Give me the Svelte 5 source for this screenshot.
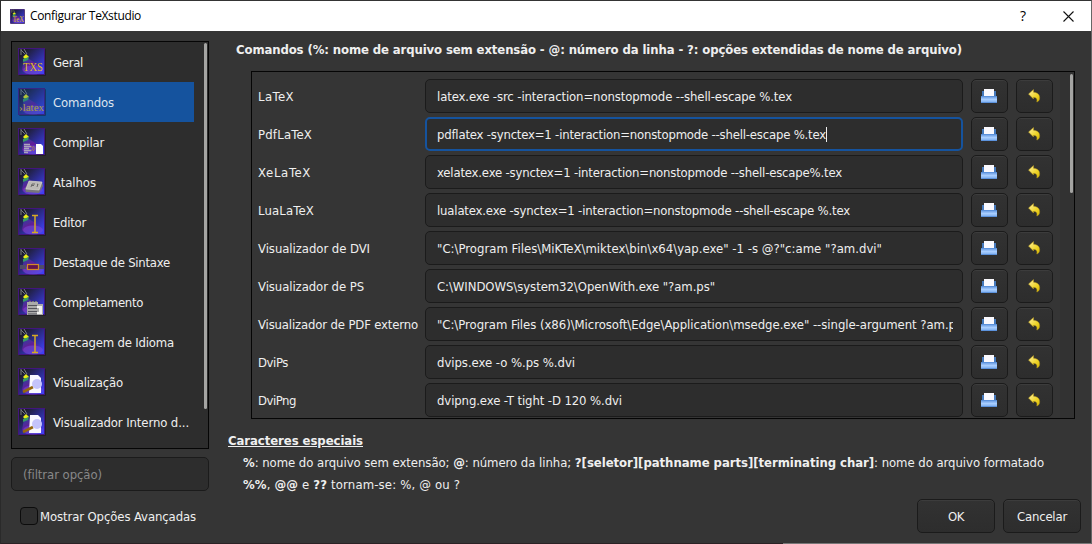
<script>
  const items = [
    { label: 'Geral', w: 30, icon: 'txs' },
    { label: 'Comandos', w: 61, icon: 'latex' },
    { label: 'Compilar', w: 51, icon: 'build' },
    { label: 'Atalhos', w: 43, icon: 'key' },
    { label: 'Editor', w: 33, icon: 'cursor' },
    { label: 'Destaque de Sintaxe', w: 117, icon: 'syntax' },
    { label: 'Completamento', w: 90, icon: 'complete' },
    { label: 'Checagem de Idioma', w: 121, icon: 'cursor' },
    { label: 'Visualização', w: 70, icon: 'preview' },
    { label: 'Visualizador Interno d...', w: 136, icon: 'preview' }
  ];
  const rows = [
    { label: 'LaTeX', w: 36, cmd: 'latex.exe -src -interaction=nonstopmode --shell-escape %.tex', cw: 355 },
    { label: 'PdfLaTeX', w: 54, cmd: 'pdflatex -synctex=1 -interaction=nonstopmode --shell-escape %.tex', cw: 389, focus: true },
    { label: 'XeLaTeX', w: 53, cmd: 'xelatex.exe -synctex=1 -interaction=nonstopmode --shell-escape%.tex', cw: 405 },
    { label: 'LuaLaTeX', w: 56, cmd: 'lualatex.exe -synctex=1 -interaction=nonstopmode --shell-escape %.tex', cw: 413 },
    { label: 'Visualizador de DVI', w: 112, cmd: '"C:\\Program Files\\MiKTeX\\miktex\\bin\\x64\\yap.exe" -1 -s @?"c:ame "?am.dvi"', cw: 445 },
    { label: 'Visualizador de PS', w: 106, cmd: 'C:\\WINDOWS\\system32\\OpenWith.exe "?am.ps"', cw: 278 },
    { label: 'Visualizador de PDF externo', w: 160, cmd: '"C:\\Program Files (x86)\\Microsoft\\Edge\\Application\\msedge.exe" --single-argument ?am.p', cw: 519 },
    { label: 'DviPs', w: 30, cmd: 'dvips.exe -o %.ps %.dvi', cw: 138 },
    { label: 'DviPng', w: 38, cmd: 'dvipng.exe -T tight -D 120 %.dvi', cw: 185 }
  ];

  // Tracks a label out or in so that it fills the given width.
  function fit(node, width) {
    const natural = node.getBoundingClientRect().width;
    node.style.letterSpacing = (width - natural) / node.textContent.length + 'px';
  }
</script>

<svelte:head><title>Configurar TeXstudio</title></svelte:head>

{#snippet appIcon(kind)}
  <svg class="pic" viewBox="0 0 28 28">
    <rect x="1" y="1" width="27" height="27" rx="1" fill="#17171c" opacity=".6" />
    <rect x=".5" y=".5" width="26" height="26" fill="url(#night)" stroke="#42157c" />
    <path d="M6 11 4 22l4 4h14l3-6-14-9z" fill="url(#beam)" />
    <ellipse cx="15" cy="22" rx="10" ry="4.500" fill="#7a50dc" opacity=".5" />
    <path d="M3 1v6M3 2l4 4M6 1l3 5" stroke="#777c80" fill="none" />
    <path d="m5 9 3-3 3 3-4 2z" fill="#e6ee14" />
    <path d="m5 11 6-2-1 3-5 2z" fill="#379a62" />
    {#if kind === 'txs'}
      <text x="5" y="23" textLength="20" lengthAdjust="spacingAndGlyphs" class="glyph" font-size="11.5">TXS</text>
    {:else if kind === 'latex'}
      <text x="1" y="23" textLength="25" lengthAdjust="spacingAndGlyphs" class="glyph" font-size="10.5">›latex</text>
    {:else if kind === 'tex'}
      <text x="5" y="24" textLength="21" lengthAdjust="spacingAndGlyphs" class="glyph" font-size="14">TeX</text>
    {:else if kind === 'build'}
      <path d="M6 16.500h6M6 18.500h7M6 20.500h5M6 22.500h7M6 24.500h4" stroke="#aaa4bd" stroke-width="1.3" />
      <path d="m13 18 2 2.500-2 2.500m2-5 2 2.500-2 2.500" stroke="#a47565" fill="none" />
      <path d="M18 16h5l2 2v8h-7z" fill="#fff" />
    {:else if kind === 'key'}
      <path d="m11 13 13 1 1 4-4 7-13-1-1-3z" fill="#77767b" />
      <path d="m11 13 13 1-3 8-13-1z" fill="#bbb9b6" stroke="#dedbd7" stroke-width=".6" />
      <path d="m13 19 1-3h3m-3 1.500h2m3 1.500 1-3-1 .5" stroke="#555" fill="none" stroke-width=".8" />
    {:else if kind === 'cursor'}
      <path d="M14 7.500h6M14 24.500h6M17 8v16" stroke="#d4aa24" stroke-width="1.5" fill="none" />
    {:else if kind === 'syntax'}
      <path d="M2 17h6v4H2zM21 17h5v4h-5z" fill="#504c66" />
      <rect x="9.500" y="16.500" width="11" height="5" fill="#65134c" stroke="#d18a28" stroke-width="1.200" />
    {:else if kind === 'complete'}
      <path d="M9 14h11v2h5v11H9z" fill="#aaa" />
      <path d="M10 17.500h9M10 20.500h9M10 23.500h9M10 26h9" stroke="#55555c" />
      <path d="M19 18h5v8h-5v-2h2v-4h-2z" fill="#f0f0ee" />
      <path d="M11 13.500h9" stroke="#777" stroke-dasharray="2 1" />
    {:else}
      <path d="M12 7h8l3 3v15H11z" fill="#f9f8ff" />
      <path d="m5 24 10-5" stroke="#95670e" stroke-width="2.600" />
      <circle cx="19" cy="16" r="5" fill="#c5c4fb" />
    {/if}
  </svg>
{/snippet}

<svg class="defs" width="0" height="0">
  <defs>
    <linearGradient id="night" x1="0" y1="0" x2="1" y2="1"><stop offset=".15" stop-color="#1c1c27" /><stop offset=".5" stop-color="#2b2b88" /><stop offset=".9" stop-color="#3f40f2" /></linearGradient>
    <linearGradient id="beam" x1="0" y1="0" x2=".8" y2="1"><stop offset="0" stop-color="#2b45a0" /><stop offset=".45" stop-color="#631c98" /><stop offset="1" stop-color="#4038e0" stop-opacity=".2" /></linearGradient>
    <linearGradient id="tray" x1="0" y1="0" x2="0" y2="1"><stop offset="0" stop-color="#5b91dc" /><stop offset=".5" stop-color="#a9ceff" /><stop offset="1" stop-color="#74a8ec" /></linearGradient>
    <linearGradient id="gold" x1="0" y1="0" x2="1" y2="1"><stop offset="0" stop-color="#fff0a0" /><stop offset=".6" stop-color="#efd52a" /><stop offset="1" stop-color="#d8b800" /></linearGradient>
  </defs>
</svg>

<div class="window">
  <header>
    <div class="logo">{@render appIcon('tex')}</div>
    <span class="title"><span use:fit={111}>Configurar TeXstudio</span></span>
    <span class="help">?</span>
    <svg class="close" width="11" height="11" viewBox="0 0 11 11"><path d="m.5.5 10 10m0-10-10 10" stroke="#111" stroke-width="1.1" /></svg>
  </header>

  <main>
    <aside>
      <div class="list">
        <ul>
          {#each items as item, i}
            <li class:selected={i === 1}>{@render appIcon(item.icon)}<span use:fit={item.w}>{item.label}</span></li>
          {/each}
        </ul>
        <div class="thumb"></div>
      </div>
      <div class="field filter"><span use:fit={79}>(filtrar opção)</span></div>
      <div class="advanced"><i class="box"></i><span use:fit={156}>Mostrar Opções Avançadas</span></div>
    </aside>

    <section>
      <h1><span use:fit={726}>Comandos (%: nome de arquivo sem extensão - @: número da linha - ?: opções extendidas de nome de arquivo)</span></h1>
      <div class="frame">
        <div class="rows">
          {#each rows as row}
            <div class="row">
              <div class="label"><span use:fit={row.w}>{row.label}</span></div>
              <div class="field" class:focus={row.focus}><div class="clip"><span use:fit={row.cw}>{row.cmd}</span>{#if row.focus}<i class="caret"></i>{/if}</div></div>
              <div class="button">
                <svg class="printer" width="16" height="15" viewBox="0 0 16 15"><path d="M1 2h14v6H1z" fill="#4579bc" /><path d="M3 0h10v8H3z" fill="#fbfaff" /><path d="M0 7h16v7H0z" fill="url(#tray)" /><path d="M0 7.500h16M0 13.500h16" stroke="#5c92dc" /></svg>
              </div>
              <div class="button">
                <svg width="13" height="14" viewBox="0 0 13 14"><path d="M.5 5 5.500.5v2.700c4.500.3 6.700 3 6 6.800-.3 1.500-1.300 2.600-2.700 3 .7-2.800-.2-4.500-3.300-4.700V10z" fill="url(#gold)" stroke="#b6971b" stroke-width=".5" /></svg>
              </div>
            </div>
          {/each}
        </div>
        <div class="track"><div class="thumb"></div></div>
      </div>
      <div class="notes">
        <h2><span use:fit={135}>Caracteres especiais</span></h2>
        <p><span use:fit={801}><b>%</b>: nome do arquivo sem extensão; <b>@</b>: número da linha; <b>?[seletor][pathname parts][terminating char]</b>: nome do arquivo formatado</span></p>
        <p><span use:fit={217}><b>%%</b>, <b>@@</b> e <b>??</b> tornam-se: %, @ ou ?</span></p>
      </div>
      <footer>
        <div class="button"><span use:fit={16}>OK</span></div>
        <div class="button"><span use:fit={50}>Cancelar</span></div>
      </footer>
    </section>
  </main>
  <div class="edge"></div>
</div>

<style>
  :global(body) { margin: 0; background: #232323; overflow: hidden; }
  * { box-sizing: border-box; }
  .defs { position: absolute; }
  .window { display: flex; flex-direction: column; width: 1092px; height: 544px; border: 1px solid #343434; border-left-color: #2a2a2a; border-right-color: #666; border-bottom: 0; background: #353535; color: #efefef; font: 13px/16px "DejaVu Sans Condensed", "DejaVu Sans", sans-serif; font-stretch: condensed; white-space: nowrap; }
  header { display: flex; align-items: center; flex: none; height: 30px; padding: 0 17px 0 9px; background: #fff; color: #000; }
  .logo { width: 15px; height: 15px; display: flex; }
  .title { flex: 1; margin-left: 5px; font: 12px/16px "Open Sans", sans-serif; }
  .help { font: 14px/16px "Open Sans", sans-serif; margin-right: 37px; }
  .pic { display: block; width: 28px; height: 28px; flex: none; }
  .logo .pic { width: 15px; height: 15px; }
  .glyph { fill: #dfbd20; font-family: "Liberation Serif", serif; }
  main { display: flex; flex: 1; min-height: 0; padding: 10px 10px 0 10px; }
  aside { width: 198px; flex: none; }
  .list { display: flex; justify-content: space-between; height: 408px; border: 1px solid #050505; background: #2d2d2d; overflow: hidden; padding-right: 1px; }
  ul { list-style: none; margin: 0; padding: 0; width: 182px; }
  li { display: flex; align-items: center; height: 40px; padding-left: 6px; gap: 7px; }
  li span, .field span, .advanced span, .button span { padding-top: 2px; }
  .selected { background: #15539e; color: #dce4ee; }
  .selected .pic { opacity: .72; }
  .thumb { width: 3px; height: 366px; margin-top: 1px; border-radius: 2px; background: #a4a4a2; }
  .field { display: flex; align-items: center; height: 34px; border: 1px solid #1b1b1b; border-radius: 5px; background: #2d2d2d; }
  .filter { margin-top: 8px; padding-left: 11px; color: #888; }
  .advanced { display: flex; align-items: center; gap: 2px; padding-left: 9px; margin-top: 16px; height: 18px; }
  .box { width: 18px; height: 18px; border: 1px solid #0c0c0c; border-radius: 4px; background: #2e2e2e; }
  section { flex: 1; min-width: 0; padding-left: 16px; display: flex; flex-direction: column; }
  h1, h2, p { margin: 0; font-size: 13px; line-height: 16px; }
  h1 { padding: 1px 0 0 11px; height: 30px; }
  .frame { display: flex; flex: none; justify-content: space-between; width: 824px; height: 348px; margin-left: 26px; border: 1px solid #050505; overflow: hidden; }
  .rows { display: flex; flex-direction: column; gap: 4px; padding: 7px 0 0 6px; }
  .row { display: flex; gap: 8px; height: 34px; align-items: center; }
  .label { width: 159px; padding-top: 2px; }
  .row .field { width: 538px; padding: 0 9px 0 11px; }
  .row .field.focus { border: 2px solid #15539e; padding: 0 8px 0 10px; }
  .clip { flex: 1; min-width: 0; overflow: hidden; display: flex; align-items: center; }
  .clip span { flex: none; }
  .caret { width: 1px; height: 15px; background: #eee; flex: none; }
  .button { display: flex; align-items: center; justify-content: center; width: 37px; height: 34px; border: 1px solid #1b1b1b; border-radius: 5px; background: linear-gradient(#323232, #2d2d2d); box-shadow: inset 0 1px #3c3c3c; }
  .printer { margin: 1px 1px 0 0; }
  .track { width: 14px; padding: 1px 0 0 10px; background: #323232; }
  .track .thumb { height: 119px; }
  .notes { padding-top: 14px; }
  .notes h2 { text-decoration: underline; padding-left: 3px; height: 22px; }
  .notes p { padding-left: 18px; height: 22px; font-weight: 400; }
  footer { display: flex; gap: 8px; justify-content: flex-end; }
  footer .button { width: 78px; }
  .edge { flex: none; height: 1px; background: linear-gradient(90deg, #2b2225 782px, #777 782px); }
</style>
